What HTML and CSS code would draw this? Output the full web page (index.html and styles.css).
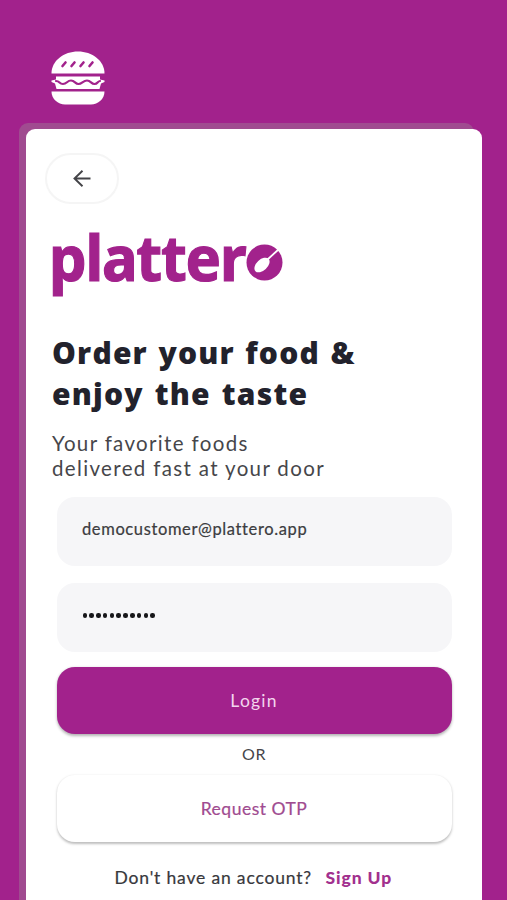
FILE: index.html
```
<!DOCTYPE html>
<html lang="en">
<head>
<meta charset="utf-8">
<title>Plattero</title>
<link rel="stylesheet" href="styles.css">
</head>
<body>
<header class="top">
  <svg class="burger" viewBox="0 0 54 54" aria-hidden="true">
    <path fill="#fff" d="M.5 22.500C.5 9.500 13 .5 27 .5s26.500 9 26.500 22z"/>
    <path stroke="#a2228c" stroke-width="2.600" stroke-linecap="round" d="M11.500 15l3-3.500M20.500 15l3-3.500M29.500 15l3-3.500M38.500 15l3-3.500"/>
    <path fill="#fff" d="M5 25.500h44v3l4.500 1v1.500l-3.500 1.500-1.500 5.500h-43L4 32.500.5 31v-1.500l4.500-1z"/>
    <path fill="none" stroke="#a2228c" stroke-width="2.200" stroke-linecap="round" d="M5 30c4 0 3 3 7 3S16 29.500 20 29.500s4 3.500 7.500 3.500S32 29.500 36 29.500s4 3.500 7.500 3.500S46 30.500 49 30"/>
    <path fill="#fff" d="M.5 40.500h53C53.500 48 47 53.500 40 53.500H14C7 53.500.5 48 .5 40.500z"/>
  </svg>
</header>
<main class="card">
  <button class="back" aria-label="Back">
    <svg viewBox="0 0 18 18" width="18" height="18"><path fill="none" stroke="#444448" stroke-width="1.900" d="M17.500 8.500H2M9.500 .8L1.500 8.500l8 7.700"/></svg>
  </button>
  <div class="logo">
    <span class="word">platter</span>
    <svg class="dish" viewBox="0 0 37 37" aria-hidden="true">
      <circle cx="18.500" cy="18.500" r="18" fill="#a2228c"/>
      <ellipse cx="16" cy="21" rx="9" ry="5.500" transform="rotate(-43 16 21)" fill="#fff"/>
      <path stroke="#fff" stroke-width="1.800" d="M21 16L33 5"/>
    </svg>
  </div>
  <h1 class="title"><span class="t1">Order your food &amp;</span><br><span class="t2">enjoy the taste</span></h1>
  <p class="sub"><span class="s1">Your favorite foods</span><br><span class="s2">delivered fast at your door</span></p>
  <form class="form">
    <div class="field"><span class="email">democustomer@plattero.app</span></div>
    <div class="field"><span class="dots"><i></i><i></i><i></i><i></i><i></i><i></i><i></i><i></i><i></i><i></i><i></i></span></div>
    <button type="button" class="btn login"><span>Login</span></button>
    <div class="or"><span>OR</span></div>
    <button type="button" class="btn otp"><span>Request OTP</span></button>
  </form>
  <p class="signup"><span class="ask">Don't have an account?</span><a class="link">Sign Up</a></p>
</main>
</body>
</html>
```
FILE: styles.css
```
* { box-sizing: border-box; }
body {
  margin: 0;
  height: 900px;
  overflow: hidden;
  background: #a2228c;
  font-family: Lato, "Open Sans", sans-serif;
  color: #46464a;
}
.top { height: 129px; padding: 51px 0 0 51px; }
.burger { display: block; width: 54px; height: 54px; }
.card {
  position: relative;
  width: 455.5px;
  height: 790px;
  margin-left: 26px;
  padding: 24px 30px 0 26px;
  background: #fff;
  border-radius: 9px;
}
.card::before {
  content: "";
  position: absolute;
  z-index: -1;
  left: -7.500px;
  top: -6.500px;
  width: 455px;
  height: 800px;
  border-radius: 9px;
  background: #a04b90;
}
.back {
  display: flex;
  align-items: center;
  justify-content: center;
  width: 74px;
  height: 51px;
  margin-left: -7px;
  padding: 0;
  border: 2px solid #f5f5f5;
  border-radius: 26px;
  background: #fff;
}
.logo { display: flex; height: 87px; margin-top: 15px; color: #a2228c; }
.word {
  width: 194px;
  margin-top: -6px;
  font: 700 63px/87px "Noto Sans", sans-serif;
  letter-spacing: -1.300px;
  white-space: nowrap;
  transform: translateX(-3px) scaleX(.945);
  transform-origin: 0 0;
  -webkit-text-stroke: 1.200px #a2228c;
}
.dish { flex: none; width: 37px; height: 37px; margin-top: 25px; }
.title {
  margin: 27px 0 0;
  font: 800 30px/40.500px "Open Sans", sans-serif;
  color: #22222c;
  white-space: nowrap;
}
.t1 { letter-spacing: 1.200px; word-spacing: 1.500px; }
.t2 { letter-spacing: 1.200px; word-spacing: 2px; }
.sub { margin: 17px 0 0; font-size: 20.500px; line-height: 25px; white-space: nowrap; }
.s1 { letter-spacing: 1.350px; }
.s2 { letter-spacing: 1.350px; }
.form { width: 395px; margin: 15.500px 0 0 4.500px; }
.field {
  display: flex;
  align-items: center;
  height: 69px;
  margin-bottom: 17px;
  padding: 0 0 5px 25.500px;
  border-radius: 18px;
  background: #f6f6f8;
}
.email { font-size: 16.500px; letter-spacing: .62px; color: #3c3c40; -webkit-text-stroke: .2px #3c3c40; }
.dots { display: flex; gap: 2.300px; margin: 2px 0 0 .5px; }
.dots i { width: 4.500px; height: 4.500px; border-radius: 50%; background: #17171a; }
.btn {
  display: block;
  width: 395px;
  height: 67px;
  padding: 0;
  border: 0;
  border-radius: 18px;
  font: 400 17.500px Lato, sans-serif;
  letter-spacing: .6px;
}
.login { margin-top: -1.500px; background: #a2228c; color: #f3d5ee; letter-spacing: 1.200px; box-shadow: 0 1.500px 3px rgba(0,0,0,.3); }
.or { height: 41px; font-size: 16px; line-height: 39px; text-align: center; letter-spacing: .5px; }
.otp { background: #fff; color: #a04b90; letter-spacing: .5px; box-shadow: 0 1.500px 2.500px rgba(0,0,0,.26); -webkit-text-stroke: .2px #a04b90; }
.signup { display: flex; margin: 25px 0 0 62.500px; font-size: 17.500px; line-height: 22px; white-space: nowrap; }
.ask { width: 211px; letter-spacing: .83px; color: #38383c; -webkit-text-stroke: .2px #38383c; }
.link { font-weight: 900; letter-spacing: .9px; color: #a2308e; }
```
